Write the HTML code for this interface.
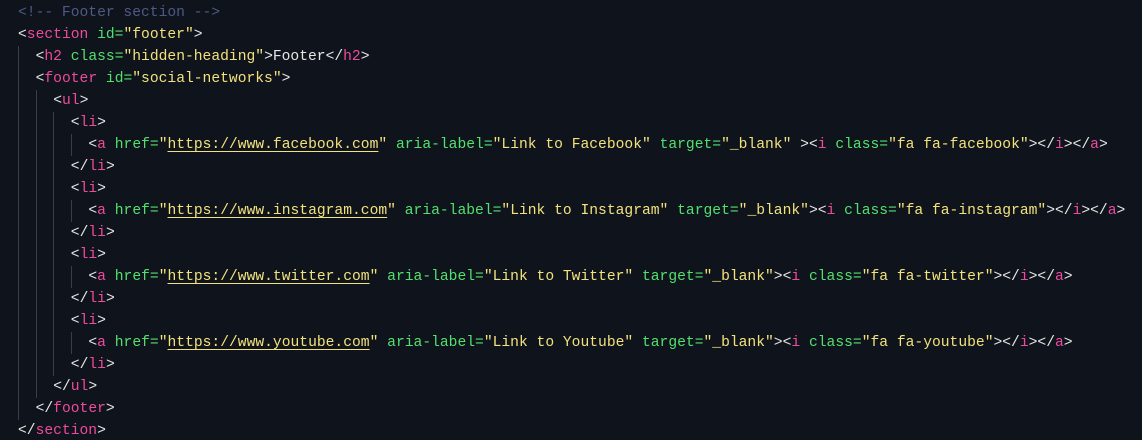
<!DOCTYPE html>
<html><head><meta charset="utf-8"><style>
html,body{margin:0;padding:0;background:#0f131b;width:1142px;height:440px;overflow:hidden}
pre{margin:0;padding:2px 0 0 18px;font-family:"Liberation Mono",monospace;font-size:14.65px;line-height:22px;color:#e6e6e6;white-space:pre}
.l{height:22px}
.g{display:inline-block;width:17.6px;height:22px;vertical-align:top;box-shadow:inset 1px 0 0 #3a3d45}
.c{color:#4e5a85}.t{color:#ee4b9e}.a{color:#52e06e}.s{color:#f2e27d}.u{text-decoration:underline;text-underline-offset:3px}
</style></head><body><pre>
<div class="l"><span class="c">&lt;!-- Footer section --&gt;</span></div><div class="l">&lt;<span class="t">section</span> <span class="a">id=</span><span class="s">"footer"</span>&gt;</div><div class="l"><span class="g"></span>&lt;<span class="t">h2</span> <span class="a">class=</span><span class="s">"hidden-heading"</span>&gt;Footer&lt;/<span class="t">h2</span>&gt;</div><div class="l"><span class="g"></span>&lt;<span class="t">footer</span> <span class="a">id=</span><span class="s">"social-networks"</span>&gt;</div><div class="l"><span class="g"></span><span class="g"></span>&lt;<span class="t">ul</span>&gt;</div><div class="l"><span class="g"></span><span class="g"></span><span class="g"></span>&lt;<span class="t">li</span>&gt;</div><div class="l"><span class="g"></span><span class="g"></span><span class="g"></span><span class="g"></span>&lt;<span class="t">a</span> <span class="a">href=</span><span class="s">"<span class="u">https://www.facebook.com</span>"</span> <span class="a">aria-label=</span><span class="s">"Link to Facebook"</span> <span class="a">target=</span><span class="s">"_blank"</span> &gt;&lt;<span class="t">i</span> <span class="a">class=</span><span class="s">"fa fa-facebook"</span>&gt;&lt;/<span class="t">i</span>&gt;&lt;/<span class="t">a</span>&gt;</div><div class="l"><span class="g"></span><span class="g"></span><span class="g"></span>&lt;/<span class="t">li</span>&gt;</div><div class="l"><span class="g"></span><span class="g"></span><span class="g"></span>&lt;<span class="t">li</span>&gt;</div><div class="l"><span class="g"></span><span class="g"></span><span class="g"></span><span class="g"></span>&lt;<span class="t">a</span> <span class="a">href=</span><span class="s">"<span class="u">https://www.instagram.com</span>"</span> <span class="a">aria-label=</span><span class="s">"Link to Instagram"</span> <span class="a">target=</span><span class="s">"_blank"</span>&gt;&lt;<span class="t">i</span> <span class="a">class=</span><span class="s">"fa fa-instagram"</span>&gt;&lt;/<span class="t">i</span>&gt;&lt;/<span class="t">a</span>&gt;</div><div class="l"><span class="g"></span><span class="g"></span><span class="g"></span>&lt;/<span class="t">li</span>&gt;</div><div class="l"><span class="g"></span><span class="g"></span><span class="g"></span>&lt;<span class="t">li</span>&gt;</div><div class="l"><span class="g"></span><span class="g"></span><span class="g"></span><span class="g"></span>&lt;<span class="t">a</span> <span class="a">href=</span><span class="s">"<span class="u">https://www.twitter.com</span>"</span> <span class="a">aria-label=</span><span class="s">"Link to Twitter"</span> <span class="a">target=</span><span class="s">"_blank"</span>&gt;&lt;<span class="t">i</span> <span class="a">class=</span><span class="s">"fa fa-twitter"</span>&gt;&lt;/<span class="t">i</span>&gt;&lt;/<span class="t">a</span>&gt;</div><div class="l"><span class="g"></span><span class="g"></span><span class="g"></span>&lt;/<span class="t">li</span>&gt;</div><div class="l"><span class="g"></span><span class="g"></span><span class="g"></span>&lt;<span class="t">li</span>&gt;</div><div class="l"><span class="g"></span><span class="g"></span><span class="g"></span><span class="g"></span>&lt;<span class="t">a</span> <span class="a">href=</span><span class="s">"<span class="u">https://www.youtube.com</span>"</span> <span class="a">aria-label=</span><span class="s">"Link to Youtube"</span> <span class="a">target=</span><span class="s">"_blank"</span>&gt;&lt;<span class="t">i</span> <span class="a">class=</span><span class="s">"fa fa-youtube"</span>&gt;&lt;/<span class="t">i</span>&gt;&lt;/<span class="t">a</span>&gt;</div><div class="l"><span class="g"></span><span class="g"></span><span class="g"></span>&lt;/<span class="t">li</span>&gt;</div><div class="l"><span class="g"></span><span class="g"></span>&lt;/<span class="t">ul</span>&gt;</div><div class="l"><span class="g"></span>&lt;/<span class="t">footer</span>&gt;</div><div class="l">&lt;/<span class="t">section</span>&gt;</div></pre></body></html>
